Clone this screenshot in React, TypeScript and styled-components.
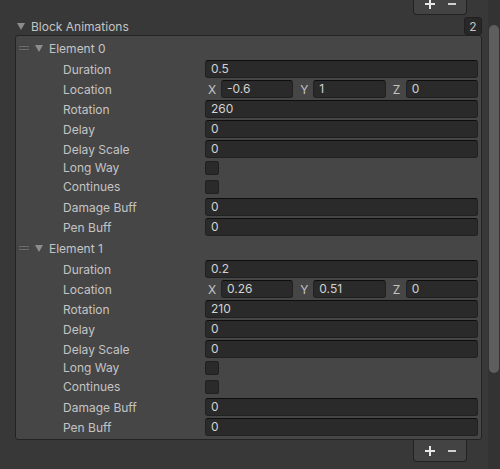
import React from 'react';
import styled, { createGlobalStyle } from 'styled-components';

const GlobalStyle = createGlobalStyle`
    html, body {
        margin: 0;
        padding: 0;
        background: #383838;
        overflow: hidden;
    }
    body {
        font-family: Inter, 'Noto Sans', 'DejaVu Sans', sans-serif;
        font-size: 12px;
        color: #c4c4c4;
    }
`;

type Field =
    | { kind: 'text'; label: string; value: string }
    | { kind: 'vec'; label: string; values: [string, string, string] }
    | { kind: 'toggle'; label: string; checked: boolean };

const makeElement = (duration: string, loc: [string, string, string], rotation: string): Field[] => [
    { kind: 'text', label: 'Duration', value: duration },
    { kind: 'vec', label: 'Location', values: loc },
    { kind: 'text', label: 'Rotation', value: rotation },
    { kind: 'text', label: 'Delay', value: '0' },
    { kind: 'text', label: 'Delay Scale', value: '0' },
    { kind: 'toggle', label: 'Long Way', checked: false },
    { kind: 'toggle', label: 'Continues', checked: false },
    { kind: 'text', label: 'Damage Buff', value: '0' },
    { kind: 'text', label: 'Pen Buff', value: '0' },
];

const elements: Field[][] = [
    makeElement('0.5', ['-0.6', '1', '0'], '260'),
    makeElement('0.2', ['0.26', '0.51', '0'], '210'),
];

const Foldout = ({ color }: { color: string }) => (
    <svg width="8" height="7" viewBox="0 0 8 7">
        <path d="M0 0 H8 L4 7 Z" fill={color} />
    </svg>
);

const Handle = () => (
    <svg width="10" height="5" viewBox="0 0 10 5">
        <rect x="0" y="0" width="10" height="1" fill="#6b6b6b" />
        <rect x="0" y="3" width="10" height="1" fill="#6b6b6b" />
    </svg>
);

const PlusMinus = () => (
    <>
        <svg width="10" height="10" viewBox="0 0 10 10">
            <rect x="0" y="4" width="10" height="2" fill="#e6e6e6" />
            <rect x="4" y="0" width="2" height="10" fill="#e6e6e6" />
        </svg>
        <svg width="8" height="10" viewBox="0 0 8 10">
            <rect x="0" y="4" width="8" height="2" fill="#cfcfcf" />
        </svg>
    </>
);

const App = (): JSX.Element => {
    return (
        <Page>
            <GlobalStyle />
            <Main>
                <FooterRow $top>
                    <Footer>
                        <PlusMinus />
                    </Footer>
                </FooterRow>
                <Header>
                    <Foldout color="#8c8c8c" />
                    <HeaderTitle>Block Animations</HeaderTitle>
                    <Badge>2</Badge>
                </Header>
                <Panel>
                    {elements.map((fields, i) => (
                        <div key={i}>
                            <ElementHeader>
                                <Handle />
                                <Foldout color="#8c8c8c" />
                                <ElementTitle>Element {i}</ElementTitle>
                            </ElementHeader>
                            {fields.map((f) => (
                                <Row key={f.label} $toggle={f.kind === 'toggle'}>
                                    <Label $toggle={f.kind === 'toggle'}>{f.label}</Label>
                                    {f.kind === 'text' && <Input>{f.value}</Input>}
                                    {f.kind === 'vec' && (
                                        <VecGroup>
                                            {['X', 'Y', 'Z'].map((axis, j) => (
                                                <VecItem key={axis}>
                                                    <AxisLabel>{axis}</AxisLabel>
                                                    <Input>{f.values[j]}</Input>
                                                </VecItem>
                                            ))}
                                        </VecGroup>
                                    )}
                                    {f.kind === 'toggle' && <Checkbox />}
                                </Row>
                            ))}
                        </div>
                    ))}
                </Panel>
                <FooterRow>
                    <Footer>
                        <PlusMinus />
                    </Footer>
                </FooterRow>
            </Main>
            <ScrollTrack>
                <ScrollThumb />
            </ScrollTrack>
        </Page>
    );
};

const Page = styled.div`
    display: flex;
    width: 500px;
    height: 469px;
    overflow: hidden;
    background: #383838;
`;

const Main = styled.div`
    width: 488px;
    display: flex;
    flex-direction: column;
`;

const FooterRow = styled.div<{ $top?: boolean }>`
    display: flex;
    justify-content: flex-end;
    margin-right: 21px;
    margin-top: ${(p) => (p.$top ? '-7px' : '0')};
`;

const Footer = styled.div`
    width: 51px;
    height: 21px;
    display: flex;
    align-items: center;
    justify-content: center;
    gap: 13px;
    padding-left: 1px;
    background: #434343;
    border: 1px solid #232323;
    border-top: none;
    border-radius: 0 0 4px 4px;
`;

const Header = styled.div`
    display: flex;
    align-items: center;
    height: 18px;
    margin: 2px 6px 0 17px;
`;

const HeaderTitle = styled.span`
    margin-left: 6px;
    flex: 1;
    color: #c4c4c4;
`;

const Badge = styled.div`
    width: 16px;
    height: 16px;
    display: flex;
    align-items: center;
    justify-content: center;
    background: #282828;
    border: 1px solid #202020;
    border-radius: 3px;
    color: #c4c4c4;
`;

const Panel = styled.div`
    margin: 0 6px 0 15px;
    padding: 1px 0 2px;
    background: #464646;
    border: 1px solid #232323;
    border-radius: 3px;
`;

const ElementHeader = styled.div`
    display: flex;
    align-items: center;
    height: 22px;
    padding-left: 3px;
    svg:nth-child(2) {
        margin-left: 6px;
    }
`;

const ElementTitle = styled.span`
    margin-left: 6px;
    color: #c4c4c4;
`;

const Row = styled.div<{ $toggle?: boolean }>`
    display: flex;
    align-items: ${(p) => (p.$toggle ? 'flex-start' : 'center')};
    height: ${(p) => (p.$toggle ? '19px' : '20px')};
    padding: 0 3px 0 47px;
`;

const Label = styled.span<{ $toggle?: boolean }>`
    width: 142px;
    flex-shrink: 0;
    color: #c4c4c4;
    line-height: ${(p) => (p.$toggle ? '17px' : '20px')};
    padding-top: ${(p) => (p.$toggle ? '0' : '1px')};
    white-space: nowrap;
`;

const Input = styled.div`
    flex: 1;
    height: 16px;
    line-height: 16px;
    padding: 0 5px;
    background: #2a2a2a;
    border: 1px solid #212121;
    border-top-color: #0e0e0e;
    border-radius: 3px;
    color: #d2d2d2;
    overflow: hidden;
    white-space: nowrap;
`;

const VecGroup = styled.div`
    flex: 1;
    display: flex;
    gap: 4px;
`;

const VecItem = styled.div`
    flex: 1;
    display: flex;
    align-items: center;
`;

const AxisLabel = styled.span`
    width: 13px;
    padding-left: 3px;
    color: #c4c4c4;
`;

const Checkbox = styled.div`
    margin-top: 2px;
    width: 12px;
    height: 12px;
    background: #2a2a2a;
    border: 1px solid #202020;
    border-radius: 2px;
`;

const ScrollTrack = styled.div`
    width: 12px;
    height: 469px;
    background: #333333;
    padding: 25px 1px 0 1px;
    box-sizing: border-box;
`;

const ScrollThumb = styled.div`
    width: 10px;
    height: 348px;
    background: #5e5e5e;
    border-radius: 5px;
`;

export default App;
